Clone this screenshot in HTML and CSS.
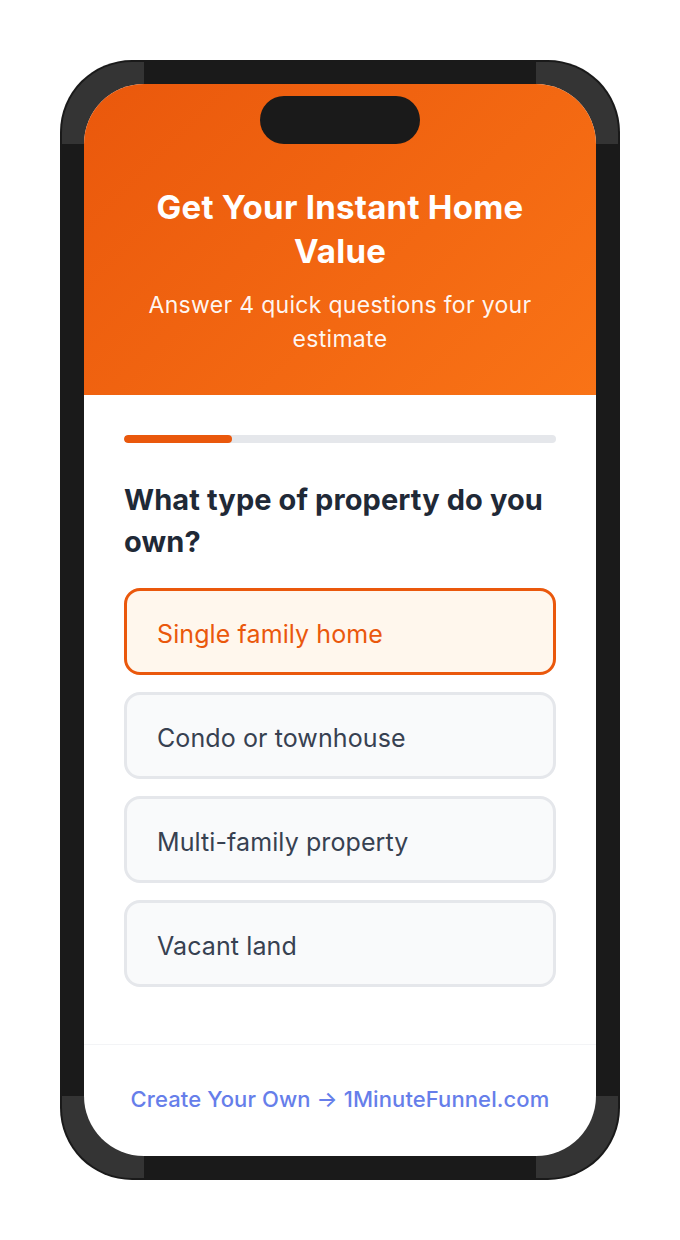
FILE: index.html
```html
<!DOCTYPE html>
<html lang="en">
<head>
<meta charset="utf-8">
<title>Get Your Instant Home Value</title>
<link rel="stylesheet" href="styles.css">
</head>
<body>
<div class="phone">
  <span class="corner corner-tl"></span>
  <span class="corner corner-tr"></span>
  <span class="corner corner-bl"></span>
  <span class="corner corner-br"></span>
  <div class="screen">
    <div class="notch"></div>
    <header class="hero">
      <h1 class="hero-title">Get Your Instant Home Value</h1>
      <p class="hero-sub">Answer 4 quick questions for your estimate</p>
    </header>
    <main class="content">
      <div class="progress"><div class="progress-fill" style="width:25%"></div></div>
      <h2 class="question">What type of property do you own?</h2>
      <div class="options">
        <button class="option option-selected">Single family home</button>
        <button class="option">Condo or townhouse</button>
        <button class="option">Multi-family property</button>
        <button class="option">Vacant land</button>
      </div>
    </main>
    <footer class="footer">
      <a class="footer-link" href="#">Create Your Own → 1MinuteFunnel.com</a>
    </footer>
  </div>
</div>
</body>
</html>
```

FILE: styles.css
```css
* { box-sizing: border-box; }

html, body {
  margin: 0;
  padding: 0;
  background: #ffffff;
}

body {
  font-family: "Inter", "Noto Sans", "Liberation Sans", sans-serif;
  padding-top: 60px;
}

.phone {
  position: relative;
  width: 560px;
  height: 1120px;
  margin: 0 auto;
  background: #1a1a1a;
  border-radius: 72px;
  padding: 24px;
  overflow: hidden;
}

.corner {
  position: absolute;
  width: 82px;
  height: 82px;
  background: #343434;
}
.corner-tl { top: 2px; left: 2px; border-top-left-radius: 70px; }
.corner-tr { top: 2px; right: 2px; border-top-right-radius: 70px; }
.corner-bl { bottom: 2px; left: 2px; border-bottom-left-radius: 70px; }
.corner-br { bottom: 2px; right: 2px; border-bottom-right-radius: 70px; }

.screen {
  position: relative;
  width: 512px;
  height: 1072px;
  background: #ffffff;
  border-radius: 60px;
  overflow: hidden;
  display: flex;
  flex-direction: column;
}

.notch {
  position: absolute;
  top: 12px;
  left: 50%;
  width: 160px;
  height: 48px;
  margin-left: -80px;
  background: #1a1a1a;
  border-radius: 24px;
}

.hero {
  background: linear-gradient(135deg, #ea580c 0%, #f97316 100%);
  padding: 101px 30px 39px;
  text-align: center;
  color: #ffffff;
}

.hero-title {
  margin: 0;
  font-size: 33px;
  line-height: 44px;
  font-weight: 700;
  letter-spacing: 0.25px;
}

.hero-sub {
  margin: 15px 0 0;
  font-size: 23px;
  line-height: 34px;
  font-weight: 400;
  letter-spacing: 0.3px;
  color: rgba(255, 255, 255, 0.95);
}

.content {
  flex: 1;
  padding: 40px 40px 0;
}

.progress {
  height: 8px;
  background: #e5e7eb;
  border-radius: 4px;
  overflow: hidden;
}

.progress-fill {
  height: 100%;
  background: #ea580c;
  border-radius: 4px;
}

.question {
  margin: 36px 0 25px;
  font-size: 29px;
  line-height: 42px;
  font-weight: 700;
  letter-spacing: 0.1px;
  color: #1f2937;
}

.options {
  display: flex;
  flex-direction: column;
  gap: 17px;
}

.option {
  display: block;
  width: 100%;
  height: 87px;
  padding: 6px 30px 0;
  text-align: left;
  font-family: inherit;
  font-size: 25px;
  line-height: 33px;
  font-weight: 400;
  letter-spacing: 0.1px;
  color: #374151;
  background: #f9fafb;
  border: 3px solid #e5e7eb;
  border-radius: 16px;
  cursor: pointer;
}

.option-selected {
  color: #ea580c;
  background: #fff7ed;
  border-color: #ea580c;
}

.footer {
  height: 112px;
  padding-bottom: 4px;
  border-top: 1px solid #f3f4f6;
  display: flex;
  align-items: center;
  justify-content: center;
}

.footer-link {
  font-size: 22px;
  font-weight: 500;
  letter-spacing: 0.1px;
  color: #667eea;
  text-decoration: none;
}
```
